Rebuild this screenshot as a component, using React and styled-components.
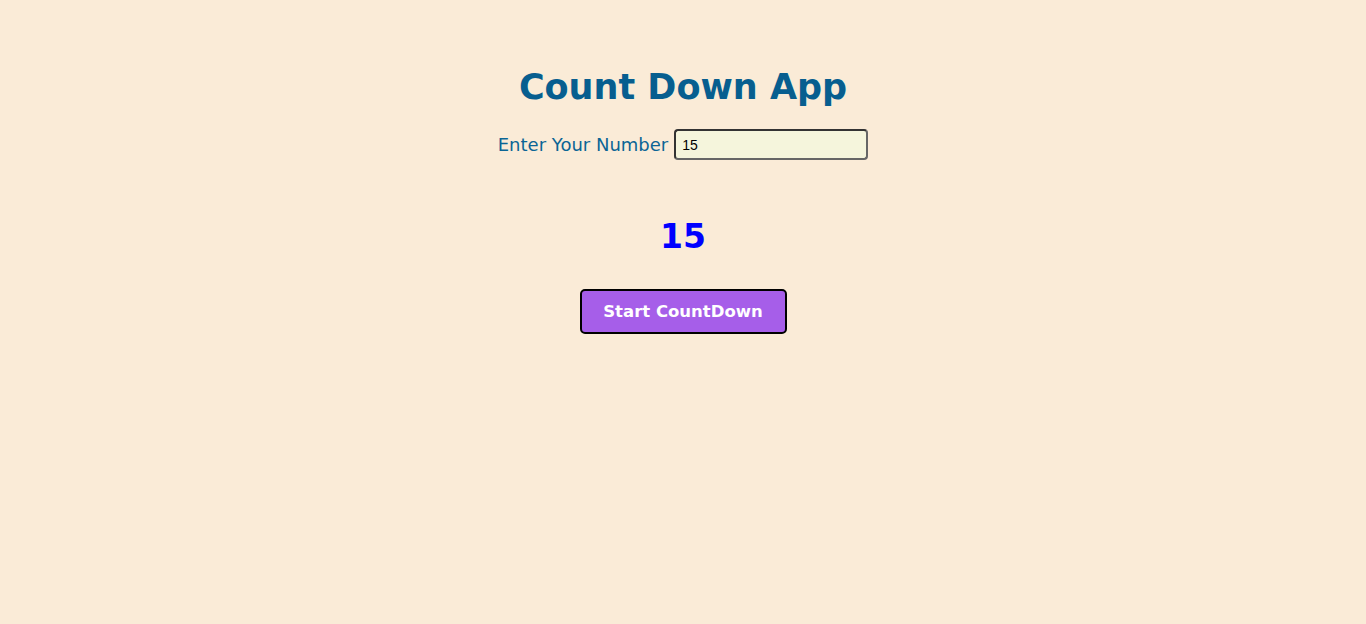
import React, { useState } from "react";
import styled, { createGlobalStyle } from "styled-components";

const GlobalStyle = createGlobalStyle`
  body {
    margin: 0;
    background-color: antiquewhite;
    font-family: "DejaVu Sans", Verdana, sans-serif;
  }
`;

const Wrapper = styled.div`
  display: flex;
  flex-direction: column;
  align-items: center;
  padding-top: 67px;
`;

const Title = styled.h1`
  margin: 0;
  font-size: 35px;
  font-weight: 700;
  color: #075e8f;
`;

const InputRow = styled.div`
  display: flex;
  align-items: center;
  gap: 6px;
  margin-top: 22px;
`;

const Label = styled.label`
  font-size: 18px;
  color: #0b6595;
`;

const NumberInput = styled.input`
  width: 194px;
  height: 31px;
  box-sizing: border-box;
  padding: 2px 6px;
  background-color: beige;
  border: 2px solid #333;
  border-bottom-color: #666;
  border-right-color: #666;
  border-radius: 4px;
  font-family: "Liberation Sans", Arial, sans-serif;
  font-size: 14px;
  outline: none;
`;

const Counter = styled.div`
  margin-top: 57px;
  font-size: 33px;
  font-weight: 700;
  color: #0000ff;
  font-family: "DejaVu Sans", Verdana, sans-serif;
`;

const StartButton = styled.button`
  margin-top: 33px;
  width: 207px;
  height: 45px;
  background-color: #a65ee9;
  color: #fff;
  border: 2px solid #000;
  border-radius: 5px;
  font-family: "DejaVu Sans", Verdana, sans-serif;
  font-size: 16.5px;
  font-weight: 700;
  cursor: pointer;
`;

export default function App() {
  const [value, setValue] = useState("15");

  return (
    <>
      <GlobalStyle />
      <Wrapper>
        <Title>Count Down App</Title>
        <InputRow>
          <Label htmlFor="num">Enter Your Number</Label>
          <NumberInput
            id="num"
            value={value}
            onChange={(e) => setValue(e.target.value)}
          />
        </InputRow>
        <Counter>{value}</Counter>
        <StartButton>Start CountDown</StartButton>
      </Wrapper>
    </>
  );
}
